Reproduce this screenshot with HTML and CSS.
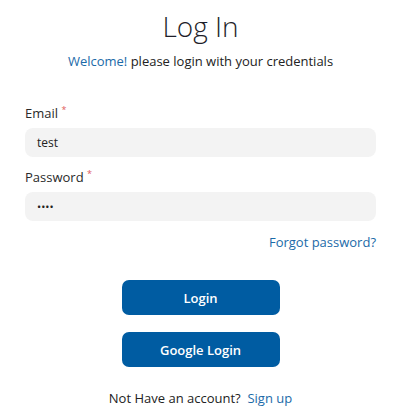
FILE: index.html
```html
<!DOCTYPE html>
<html>
<head>
<meta charset="utf-8">
<link rel="stylesheet" href="styles.css">
</head>
<body>
<div class="page">
  <h1 class="title">Log In</h1>
  <p class="subtitle"><span class="accent">Welcome!</span> please login with your credentials</p>
  <form class="form">
    <label class="label">Email <span class="req">*</span></label>
    <div class="input">test</div>
    <label class="label">Password <span class="req">*</span></label>
    <div class="input dots">••••</div>
    <div class="forgot-row"><a class="link">Forgot password?</a></div>
    <div class="buttons">
      <button type="button" class="btn">Login</button>
      <button type="button" class="btn">Google Login</button>
    </div>
  </form>
  <p class="signup">Not Have an account?&nbsp; <a class="link">Sign up</a></p>
</div>
</body>
</html>
```

FILE: styles.css
```css
* { box-sizing: border-box; }
html, body { margin: 0; padding: 0; background: #fff; }
body { font-family: "Open Sans", "Noto Sans", sans-serif; color: #222; }
.page { width: 400px; padding: 0 24px 0 25px; }
.title {
  margin: 0;
  padding-top: 8px;
  height: 44px;
  line-height: 36px;
  text-align: center;
  font-size: 28px;
  font-weight: 300;
  color: #1f1f2a;
}
.subtitle {
  margin: 8px 0 0;
  line-height: 18px;
  text-align: center;
  font-size: 13px;
  color: #222;
}
.accent { color: #1b6aa8; }
.form { display: flex; flex-direction: column; margin-top: 34px; }
.label {
  font-size: 13px;
  line-height: 18px;
  color: #2a2a2a;
  margin-bottom: 6px;
}
.req { color: #e05a5a; font-size: 9px; vertical-align: top; position: relative; top: -3px; }
.input {
  height: 29px;
  background: #f3f3f3;
  border-radius: 8px;
  padding: 0 12px;
  font-size: 12px;
  line-height: 29px;
  color: #222;
  margin-bottom: 11px;
}
.dots { font-size: 11px; letter-spacing: 0; }
.forgot-row { text-align: right; margin-top: 0; line-height: 18px; }
.link { color: #1b6aa8; font-size: 13px; text-decoration: none; }
.buttons { display: flex; flex-direction: column; align-items: center; gap: 17px; margin-top: 29px; }
.btn {
  width: 158px;
  height: 35px;
  border: none;
  border-radius: 7px;
  background: #005ca2;
  color: #fff;
  font-family: inherit;
  font-size: 13px;
  font-weight: 600;
}
.signup {
  margin: 22px 0 0;
  text-align: center;
  font-size: 13px;
  line-height: 18px;
  color: #222;
}
```
